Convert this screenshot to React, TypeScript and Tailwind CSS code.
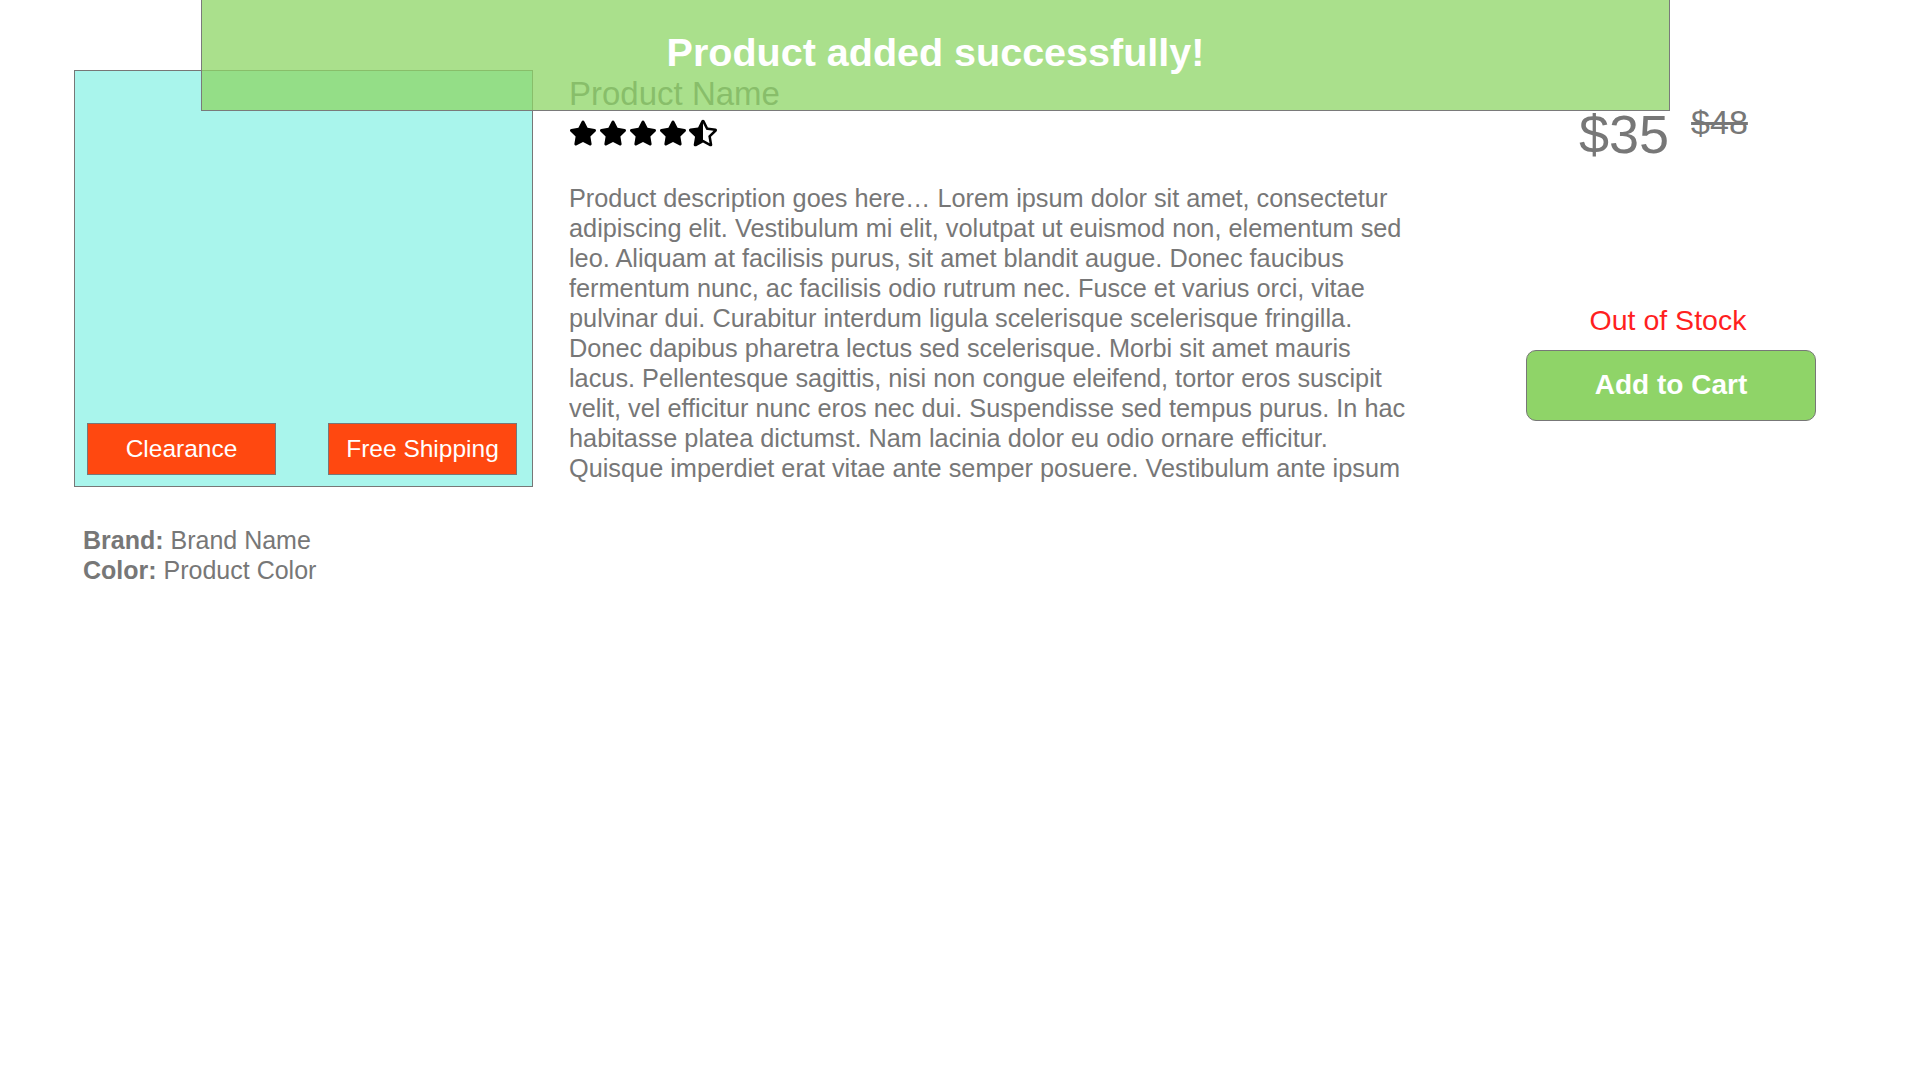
import { FaStar, FaStarHalfAlt } from "react-icons/fa";

const DESC =
  "Product description goes here… Lorem ipsum dolor sit amet, consectetur adipiscing elit. Vestibulum mi elit, volutpat ut euismod non, elementum sed leo. Aliquam at facilisis purus, sit amet blandit augue. Donec faucibus fermentum nunc, ac facilisis odio rutrum nec. Fusce et varius orci, vitae pulvinar dui. Curabitur interdum ligula scelerisque scelerisque fringilla. Donec dapibus pharetra lectus sed scelerisque. Morbi sit amet mauris lacus. Pellentesque sagittis, nisi non congue eleifend, tortor eros suscipit velit, vel efficitur nunc eros nec dui. Suspendisse sed tempus purus. In hac habitasse platea dictumst. Nam lacinia dolor eu odio ornare efficitur. Quisque imperdiet erat vitae ante semper posuere. Vestibulum ante ipsum primis in faucibus orci luctus et ultrices posuere cubilia curae; Integer at nibh vel nunc fermentum commodo.";

export default function App() {
  return (
    <div className="relative w-[1920px] h-[1080px] overflow-hidden bg-white font-['Liberation_Sans',Arial,sans-serif] text-[#777777]">
      {/* Toast */}
      <div className="absolute top-0 left-[201px] z-10 h-[111px] w-[1469px] border border-t-0 border-[#7a7a7a] bg-[#8dd566]/75">
        <div className="pt-[33px] text-center text-[39.5px] font-bold leading-none text-white">
          Product added successfully!
        </div>
      </div>

      <div className="flex pl-[74px] pt-[70px]">
        {/* Left column */}
        <div className="flex w-[459px] flex-col">
          <div className="flex h-[417px] w-[459px] items-end justify-between border border-[#777777] bg-[#a9f5ec] pb-[11px] pl-[12px] pr-[15px]">
            <div className="flex h-[52px] w-[189px] items-center justify-center border border-[#777777] bg-[#ff4810] text-[24.5px] text-white">
              Clearance
            </div>
            <div className="flex h-[52px] w-[189px] items-center justify-center border border-[#777777] bg-[#ff4810] text-[24.5px] text-white">
              Free Shipping
            </div>
          </div>
          <div className="mt-[38px] pl-[9px] text-[25px] leading-[30px]">
            <div>
              <span className="font-bold">Brand:</span> Brand Name
            </div>
            <div>
              <span className="font-bold">Color:</span> Product Color
            </div>
          </div>
        </div>

        {/* Middle column */}
        <div className="ml-[36px] flex w-[844px] flex-col">
          <div className="mt-[7px] text-[33px] leading-none">Product Name</div>
          <div className="mt-[9px] flex gap-[2px] text-black">
            <FaStar size={28} />
            <FaStar size={28} />
            <FaStar size={28} />
            <FaStar size={28} />
            <FaStarHalfAlt size={28} />
          </div>
          <p className="mt-[36px] h-[300px] overflow-hidden text-[25.3px] leading-[30px]">{DESC}</p>
        </div>

        {/* Right column */}
        <div className="ml-[113px] flex w-[290px] flex-col">
          <div className="mt-[37px] ml-[53px] flex items-start gap-[22px]">
            <span className="text-[54px] leading-none">$35</span>
            <span className="-mt-[2px] text-[34px] leading-none line-through">$48</span>
          </div>
          <div className="mt-[145px] pr-[6px] text-center text-[28.5px] leading-none text-[#ff1f1f]">
            Out of Stock
          </div>
          <button className="mt-[15px] flex h-[71px] w-[290px] items-center justify-center rounded-[10px] border border-[#777777] bg-[#8fd468] text-[28px] font-bold text-white">
            Add to Cart
          </button>
        </div>
      </div>
    </div>
  );
}
